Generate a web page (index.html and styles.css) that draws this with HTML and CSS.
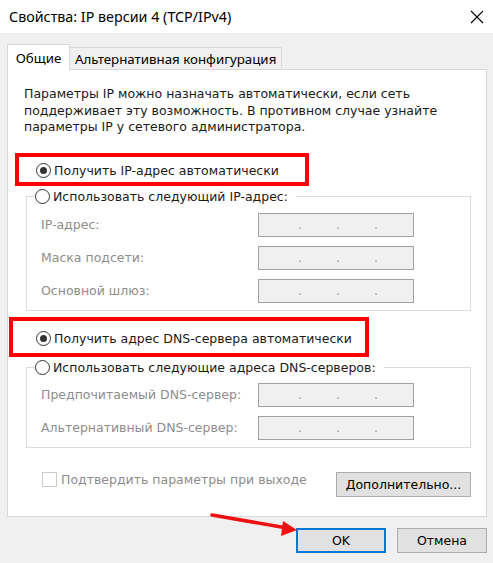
FILE: index.html
```html
<!DOCTYPE html>
<html lang="ru">
<head>
    <meta charset="UTF-8">
    <meta name="viewport" content="width=device-width, initial-scale=1.0">
    <title>Свойства: IP версии 4 (TCP/IPv4)</title>
    <link rel="stylesheet" href="styles.css">
</head>
<body>
    <div class="dialog">
        <header class="titlebar">
            <span class="title">Свойства: IP версии 4 (TCP/IPv4)</span>
            <svg class="close" width="14" height="14" viewBox="0 0 14 14">
                <path d="M1 1 L13 13 M13 1 L1 13" stroke="#000" stroke-width="1.1" fill="none"/>
            </svg>
        </header>

        <main class="content">
            <nav class="tabs">
                <div class="tab active">Общие</div>
                <div class="tab">Альтернативная конфигурация</div>
            </nav>

            <section class="panel">
                <p class="intro">Параметры IP можно назначать автоматически, если сеть поддерживает эту возможность. В противном случае узнайте параметры IP у сетевого администратора.</p>

                <div class="radioRow"><span class="radio checked"></span>Получить IP-адрес автоматически</div>

                <fieldset class="group">
                    <legend><span class="radio"></span>Использовать следующий IP-адрес:</legend>
                    <div class="field"><span class="fieldLabel">IP-адрес:</span><span class="ipBox"><i>.</i><i>.</i><i>.</i></span></div>
                    <div class="field"><span class="fieldLabel">Маска подсети:</span><span class="ipBox"><i>.</i><i>.</i><i>.</i></span></div>
                    <div class="field"><span class="fieldLabel">Основной шлюз:</span><span class="ipBox"><i>.</i><i>.</i><i>.</i></span></div>
                </fieldset>

                <div class="radioRow dnsRow"><span class="radio checked"></span>Получить адрес DNS-сервера автоматически</div>

                <fieldset class="group dnsGroup">
                    <legend><span class="radio"></span>Использовать следующие адреса DNS-серверов:</legend>
                    <div class="field"><span class="fieldLabel">Предпочитаемый DNS-сервер:</span><span class="ipBox"><i>.</i><i>.</i><i>.</i></span></div>
                    <div class="field"><span class="fieldLabel">Альтернативный DNS-сервер:</span><span class="ipBox"><i>.</i><i>.</i><i>.</i></span></div>
                </fieldset>

                <div class="panelFooter">
                    <div class="checkRow"><span class="checkbox"></span>Подтвердить параметры при выходе</div>
                    <button class="btn advanced">Дополнительно...</button>
                </div>

                <!-- red annotation frames -->
                <span class="mark markIp"></span>
                <span class="mark markDns"></span>
            </section>

            <div class="actions">
                <button class="btn okBtn">OK</button>
                <button class="btn">Отмена</button>
            </div>
        </main>

        <svg class="arrow" width="493" height="563" viewBox="0 0 493 563">
            <line x1="212" y1="515" x2="287" y2="528" stroke="#ee1111" stroke-width="3.5" stroke-linecap="round"/>
            <polygon points="297,530 283,521 281,536" fill="#ee1111"/>
        </svg>
    </div>
</body>
</html>
```

FILE: styles.css
```css
/* Dialog window */
body {
    margin: 0;
    padding: 0;
    background-color: #f0f0f0;
    font-family: "DejaVu Sans", sans-serif;
    font-size: 12.5px;
    color: #1a1a1a;
}

.dialog {
    position: relative;
    width: 493px;
    height: 563px;
    overflow: hidden;
}

.titlebar {
    height: 33px;
    background-color: #fff;
    display: flex;
    align-items: center;
    justify-content: space-between;
    padding: 0 9px 0 9px;
}

.title {
    font-family: "Noto Sans", sans-serif;
    font-size: 14.3px;
    color: #000;
}

.content {
    padding: 11px 6px 0 7px;
}

/* Tabs */
.tabs {
    display: flex;
    align-items: flex-end;
    height: 25px;
    font-family: "Noto Sans", sans-serif;
    font-size: 13.3px;
}

.tab {
    height: 22px;
    padding: 0 5px;
    border: 1px solid #d9d9d9;
    border-bottom: none;
    display: flex;
    align-items: center;
    box-sizing: border-box;
    color: #000;
}

.tab.active {
    height: 26px;
    width: 63px;
    justify-content: center;
    background-color: #fff;
    position: relative;
    z-index: 1;
    margin-bottom: -1px;
}

.tab + .tab {
    border-left: none;
}

/* Panel */
.panel {
    position: relative;
    background-color: #fff;
    border: 1px solid #d9d9d9;
    height: 448px;
    box-sizing: border-box;
    padding: 16px 15px 0 16px;
}

.intro {
    margin: 0;
    line-height: 16.5px;
}

.radioRow {
    display: flex;
    align-items: center;
    height: 18px;
    margin: 26px 0 0 12px;
}

.dnsRow {
    margin-top: 19px;
}

.radio {
    width: 15px;
    height: 15px;
    border: 1px solid #333;
    border-radius: 50%;
    margin-right: 3px;
    box-sizing: border-box;
    display: inline-block;
    position: relative;
    background: #fff;
    flex-shrink: 0;
}

.radio.checked::after {
    content: "";
    position: absolute;
    left: 3px;
    top: 3px;
    width: 7px;
    height: 7px;
    border-radius: 50%;
    background-color: #333;
}

/* Group boxes */
.group {
    border: 1px solid #dcdcdc;
    margin: 8px 0 0 2px;
    padding: 7px 56px 7px 14px;
}

.dnsGroup {
    margin-top: 11px;
    padding-top: 6px;
}

.group legend {
    display: flex;
    align-items: center;
    height: 18px;
    padding: 0 8px 0 0;
    margin-left: -6px;
}

.field {
    display: flex;
    align-items: center;
    justify-content: space-between;
    color: #8d8d8d;
}

.field + .field {
    margin-top: 9px;
}

.ipBox {
    width: 156px;
    height: 24px;
    box-sizing: border-box;
    border: 1px solid #a0a0a0;
    background-color: #f0f0f0;
    display: flex;
    padding: 0 0 0 39px;
    color: #999;
}

.ipBox i {
    font-style: normal;
    width: 38px;
    line-height: 22px;
}

/* Footer inside panel */
.panelFooter {
    display: flex;
    justify-content: space-between;
    align-items: flex-start;
    margin: 24px 0 0 18px;
}

.checkRow {
    display: flex;
    align-items: center;
    color: #8d8d8d;
    height: 17px;
    margin-top: -1px;
}

.checkbox {
    width: 15px;
    height: 15px;
    box-sizing: border-box;
    border: 1px solid #cccccc;
    margin-right: 4px;
}

.btn {
    font-family: "DejaVu Sans", sans-serif;
    font-size: 12.5px;
    color: #000;
    background-color: #e1e1e1;
    border: 1px solid #adadad;
    height: 25px;
    width: 90px;
    padding: 0;
}

.advanced {
    width: 135px;
}

.actions {
    display: flex;
    justify-content: flex-end;
    gap: 11px;
    margin-top: 11px;
}

.okBtn {
    border: 2px solid #0078d7;
}

/* Annotations */
.mark {
    position: absolute;
    border: 4px solid #ff0000;
    box-sizing: border-box;
}

.markIp {
    left: 7px;
    top: 83px;
    width: 294px;
    height: 33px;
}

.markDns {
    left: 1px;
    top: 247px;
    width: 360px;
    height: 40px;
}

.arrow {
    position: absolute;
    left: 0;
    top: 0;
    pointer-events: none;
}
```
